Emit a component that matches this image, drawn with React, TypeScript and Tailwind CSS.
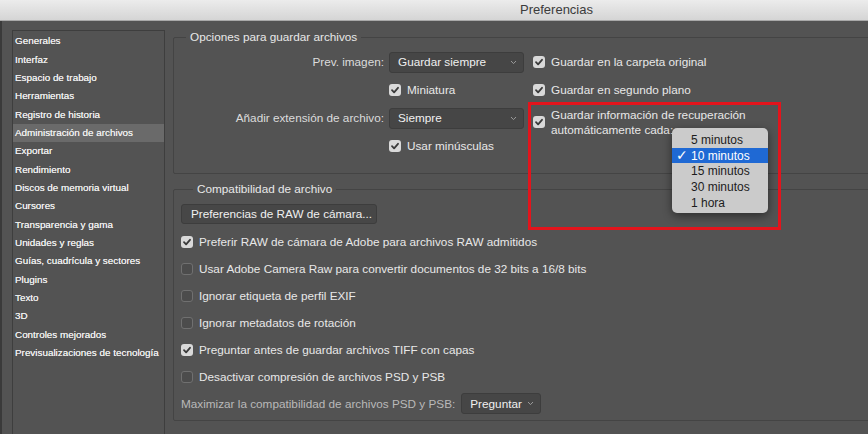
import React from "react";

const sections = [
  "Generales",
  "Interfaz",
  "Espacio de trabajo",
  "Herramientas",
  "Registro de historia",
  "Administración de archivos",
  "Exportar",
  "Rendimiento",
  "Discos de memoria virtual",
  "Cursores",
  "Transparencia y gama",
  "Unidades y reglas",
  "Guías, cuadrícula y sectores",
  "Plugins",
  "Texto",
  "3D",
  "Controles mejorados",
  "Previsualizaciones de tecnología",
];

const compatOptions = [
  { label: "Preferir RAW de cámara de Adobe para archivos RAW admitidos", checked: true },
  { label: "Usar Adobe Camera Raw para convertir documentos de 32 bits a 16/8 bits", checked: false },
  { label: "Ignorar etiqueta de perfil EXIF", checked: false },
  { label: "Ignorar metadatos de rotación", checked: false },
  { label: "Preguntar antes de guardar archivos TIFF con capas", checked: true },
  { label: "Desactivar compresión de archivos PSD y PSB", checked: false },
];

const intervals = ["5 minutos", "10 minutos", "15 minutos", "30 minutos", "1 hora"];

function Check({ checked }: { checked: boolean }) {
  if (!checked) {
    return (
      <span className="block w-[12px] h-[12px] shrink-0 rounded-[3px] border border-[#707070] bg-[#4c4c4c]" />
    );
  }
  return (
    <span className="flex items-center justify-center w-[12px] h-[12px] shrink-0 rounded-[3px] bg-[#d9d9d9]">
      <svg width="10" height="10" viewBox="0 0 10 10">
        <path d="M2 5.2 L4.1 7.3 L8 2.8" fill="none" stroke="#3a3a3a" strokeWidth="1.8" strokeLinecap="round" strokeLinejoin="round" />
      </svg>
    </span>
  );
}

function CheckRow({ label, checked, className = "" }: { label: string; checked: boolean; className?: string }) {
  return (
    <div className={"flex items-center gap-[6px] " + className}>
      <Check checked={checked} />
      <span className="text-[#e8e8e8] whitespace-nowrap">{label}</span>
    </div>
  );
}

function Chevron() {
  return (
    <svg width="7" height="5" viewBox="0 0 7 5" className="shrink-0">
      <path d="M1 1 L3.5 3.6 L6 1" fill="none" stroke="#9a9a9a" strokeWidth="1" />
    </svg>
  );
}

function Select({ value, className = "" }: { value: string; className?: string }) {
  return (
    <div
      className={
        "flex items-center justify-between h-[21px] pl-[8px] pr-[6px] rounded-[3px] border border-[#3d3d3d] bg-[#464646] text-[#f0f0f0] " +
        className
      }
    >
      <span className="whitespace-nowrap">{value}</span>
      <Chevron />
    </div>
  );
}

export default function App() {
  return (
    <div className="relative w-[868px] h-[434px] overflow-hidden bg-[#535353] flex flex-col font-['Liberation_Sans',Arial,sans-serif] text-[11.75px] leading-[14px]">
      {/* title bar */}
      <div className="h-[21px] shrink-0 flex items-center pl-[520px] border-b border-[#a9a9a9] bg-gradient-to-b from-[#ececec] to-[#d5d5d5]">
        <span className="text-[13px] text-[#3c3c3c]">Preferencias</span>
      </div>

      <div className="flex flex-1 min-h-0 border-l-2 border-[#3a3a3a]">
        {/* sidebar */}
        <div className="ml-[10px] mt-[9px] w-[153px] h-[420px] shrink-0 border border-[#3e3e3e] pt-[1px]">
          {sections.map((s) => (
            <div
              key={s}
              className={
                "h-[18.35px] flex items-center pl-[2px] text-[9.9px] text-[#ededed] whitespace-nowrap [text-shadow:0_0_0.2px_#ededed] " +
                (s === "Administración de archivos" ? "bg-[#6a6a6a]" : "")
              }
            >
              {s}
            </div>
          ))}
        </div>

        {/* main */}
        <div className="ml-[8px] mt-[9px] w-[740px] shrink-0">
          <fieldset className="border border-[#444] rounded-[2px] pt-[4px] pb-[13px]">
            <legend className="ml-[12px] px-[4px] text-[#e8e8e8]">Opciones para guardar archivos</legend>
            <div className="flex">
              <div className="flex flex-col">
                <div className="flex items-center h-[28px]">
                  <span className="w-[215px] pr-[5px] text-right text-[#dcdcdc]">Prev. imagen:</span>
                  <Select value="Guardar siempre" className="w-[135px]" />
                </div>
                <div className="flex items-center h-[28px]">
                  <span className="w-[215px]" />
                  <CheckRow label="Miniatura" checked />
                </div>
                <div className="flex items-center h-[28px]">
                  <span className="w-[215px] pr-[5px] text-right text-[#dcdcdc]">Añadir extensión de archivo:</span>
                  <Select value="Siempre" className="w-[135px]" />
                </div>
                <div className="flex items-center h-[28px]">
                  <span className="w-[215px]" />
                  <CheckRow label="Usar minúsculas" checked />
                </div>
              </div>
              <div className="ml-[9px] flex flex-col">
                <CheckRow label="Guardar en la carpeta original" checked className="h-[28px]" />
                <CheckRow label="Guardar en segundo plano" checked className="h-[27px]" />
                <div className="flex items-center gap-[6px] mt-[4px]">
                  <Check checked />
                  <span className="text-[#e8e8e8] leading-[15px]">
                    Guardar información de recuperación
                    <br />
                    automáticamente cada:
                  </span>
                </div>
              </div>
            </div>
          </fieldset>

          <fieldset className="mt-[8px] border border-[#444] rounded-[2px] pl-[7px] pt-[8px] pb-[3px]">
            <legend className="ml-[12px] px-[4px] text-[#e8e8e8]">Compatibilidad de archivo</legend>
            <div className="w-[196px] h-[20px] flex items-center pl-[9px] rounded-[3px] border border-[#3d3d3d] bg-[#474747] text-[#f0f0f0] whitespace-nowrap">
              Preferencias de RAW de cámara...
            </div>
            <div className="mt-[4px] flex flex-col">
              {compatOptions.map((o) => (
                <CheckRow key={o.label} label={o.label} checked={o.checked} className="h-[27px]" />
              ))}
            </div>
            <div className="flex items-center h-[27px]">
              <span className="text-[#b9b9b9] whitespace-nowrap">Maximizar la compatibilidad de archivos PSD y PSB:</span>
              <Select value="Preguntar" className="ml-[6px] w-[80px]" />
            </div>
          </fieldset>
        </div>
      </div>

      {/* highlight annotation */}
      <div className="absolute left-[528px] top-[102px] w-[253px] h-[128px] border-[3px] border-[#e3141c] pointer-events-none" />

      {/* popup menu */}
      <div className="absolute left-[672px] top-[128px] w-[96px] h-[85px] pt-[4px] rounded-[5px] bg-[#cbcbcb] shadow-[0_3px_10px_rgba(0,0,0,0.45)] text-[12px]">
        {intervals.map((v) => {
          const on = v === "10 minutos";
          return (
            <div
              key={v}
              className={
                "relative h-[15.7px] flex items-center pl-[19px] " +
                (on ? "bg-[#1f69d4] text-white" : "text-[#1c1c1c]")
              }
            >
              {on && (
                <span className="absolute left-[4px] top-[-1px] font-['DejaVu_Sans',sans-serif] font-bold text-[14px] leading-[16px]">
                  ✓
                </span>
              )}
              {v}
            </div>
          );
        })}
      </div>
    </div>
  );
}
